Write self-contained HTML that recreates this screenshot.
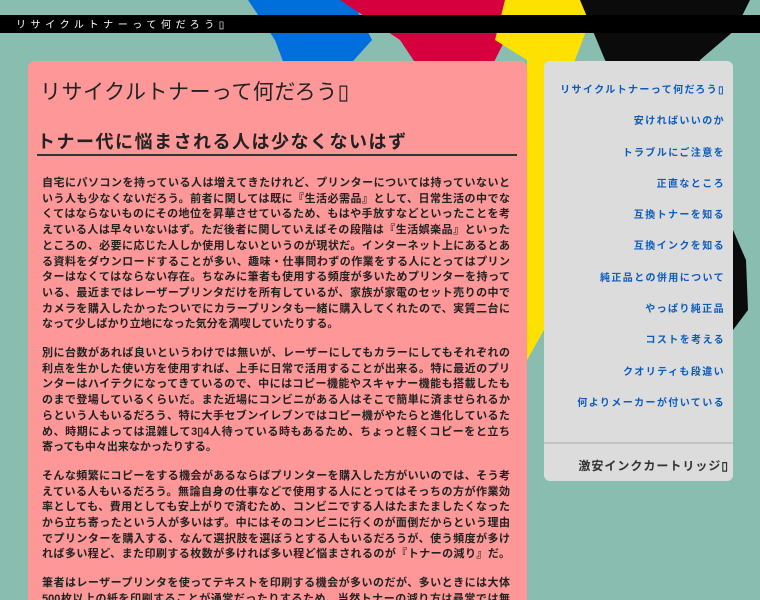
<!DOCTYPE html>
<html><head><meta charset="utf-8">
<style>
*{margin:0;padding:0;box-sizing:border-box}
html,body{width:760px;height:600px;overflow:hidden;background:#88bdb0;font-family:"Liberation Sans","Noto Sans CJK JP",sans-serif}
#bg{position:absolute;left:0;top:0}
#bar{position:absolute;left:0;top:15px;width:760px;height:18px;background:#000;color:#fff;font-size:10px;line-height:18px;padding-left:16px;letter-spacing:4.6px;padding-top:2px}
#main{position:absolute;left:28px;top:61px;width:499px;height:539px;overflow:hidden;background:#fe9898;border-radius:7px 7px 0 0;color:#222}
#main h1{position:absolute;left:12px;top:15px;font-size:21px;font-weight:normal;letter-spacing:0.5px;color:#222}
#main h2{position:absolute;left:9px;top:70px;width:480px;font-size:18px;font-weight:bold;border-bottom:2px solid #333;padding-bottom:1px;letter-spacing:1.5px;line-height:22px}
#txt{position:absolute;left:14px;top:115px;width:468px}
#txt p{font-size:11px;font-weight:bold;line-height:15.7px;margin-bottom:13px;color:#222}
#txt p span{display:block;white-space:nowrap;text-align:justify;text-align-last:justify}
#txt p span.l{text-align-last:left}
#side{position:absolute;left:544px;top:61px;width:189px;height:420px;background:#dcdcdc;border-radius:6px}
#side ul{list-style:none;padding-top:22px}
#side li{text-align:right;padding-right:8px;font-size:10px;font-weight:bold;color:#0c5cbc;letter-spacing:1.4px;height:31.3px;line-height:16px;white-space:nowrap}
#side .hr{position:absolute;left:0;top:381px;width:189px;height:2px;background:#c4c4c4}
#side .b{position:absolute;right:4px;top:396px;font-size:12px;font-weight:bold;color:#333;letter-spacing:1px}
</style></head><body>
<svg id="bg" width="760" height="600" viewBox="0 0 760 600">
<path d="M248 0 L352 0 L372 40 L345 70 L290 80 L275 40 Z" fill="#006fdc"/>
<path d="M340 0 L522 0 L505 40 L490 70 L420 70 L400 40 Z" fill="#d6003f"/>
<path d="M505 0 L598 0 L575 60 L560 120 L545 200 L544 330 L527 360 L527 60 L495 40 Z" fill="#ffe100"/>
<path d="M580 0 L750 0 L735 30 L700 60 L690 120 L720 200 L746 260 L748 310 L733 330 L733 200 L640 100 L605 60 Z" fill="#0b0b0b"/>
<path d="M395 40 Q405 55 412 75 L350 75 Z" fill="#88bdb0"/>
</svg>
<div id="bar">リサイクルトナーって何だろう&#x25AF;</div>
<div id="main">
<h1>リサイクルトナーって何だろう&#x25AF;</h1>
<h2>トナー代に悩まされる人は少なくないはず</h2>
<div id="txt">
<p><span>自宅にパソコンを持っている人は増えてきたけれど、プリンターについては持っていないと</span><span>いう人も少なくないだろう。前者に関しては既に『生活必需品』として、日常生活の中でな</span><span>くてはならないものにその地位を昇華させているため、もはや手放すなどといったことを考</span><span>えている人は早々いないはず。ただ後者に関していえばその段階は『生活娯楽品』といった</span><span>ところの、必要に応じた人しか使用しないというのが現状だ。インターネット上にあるとあ</span><span>る資料をダウンロードすることが多い、趣味・仕事問わずの作業をする人にとってはプリン</span><span>ターはなくてはならない存在。ちなみに筆者も使用する頻度が多いためプリンターを持って</span><span>いる、最近まではレーザープリンタだけを所有しているが、家族が家電のセット売りの中で</span><span>カメラを購入したかったついでにカラープリンタも一緒に購入してくれたので、実質二台に</span><span class="l">なって少しばかり立地になった気分を満喫していたりする。</span></p>
<p><span>別に台数があれば良いというわけでは無いが、レーザーにしてもカラーにしてもそれぞれの</span><span>利点を生かした使い方を使用すれば、上手に日常で活用することが出来る。特に最近のプリ</span><span>ンターはハイテクになってきているので、中にはコピー機能やスキャナー機能も搭載したも</span><span>のまで登場しているくらいだ。また近場にコンビニがある人はそこで簡単に済ませられるか</span><span>らという人もいるだろう、特に大手セブンイレブンではコピー機がやたらと進化しているた</span><span>め、時期によっては混雑して3&#x25AF;4人待っている時もあるため、ちょっと軽くコピーをと立ち</span><span class="l">寄っても中々出来なかったりする。</span></p>
<p><span>そんな頻繁にコピーをする機会があるならばプリンターを購入した方がいいのでは、そう考</span><span>えている人もいるだろう。無論自身の仕事などで使用する人にとってはそっちの方が作業効</span><span>率としても、費用としても安上がりで済むため、コンビニでする人はたまたましたくなった</span><span>から立ち寄ったという人が多いはず。中にはそのコンビニに行くのが面倒だからという理由</span><span>でプリンターを購入する、なんて選択肢を選ぼうとする人もいるだろうが、使う頻度が多け</span><span>れば多い程ど、また印刷する枚数が多ければ多い程ど悩まされるのが『トナーの減り』だ。</span></p>
<p><span>筆者はレーザープリンタを使ってテキストを印刷する機会が多いのだが、多いときには大体</span><span>500枚以上の紙を印刷することが通常だったりするため、当然トナーの減り方は尋常では無</span></p>
</div>
</div>
<div id="side">
<ul>
<li>リサイクルトナーって何だろう&#x25AF;</li>
<li>安ければいいのか</li>
<li>トラブルにご注意を</li>
<li>正直なところ</li>
<li>互換トナーを知る</li>
<li>互換インクを知る</li>
<li>純正品との併用について</li>
<li>やっぱり純正品</li>
<li>コストを考える</li>
<li>クオリティも段違い</li>
<li>何よりメーカーが付いている</li>
</ul>
<div class="hr"></div>
<div class="b">激安インクカートリッジ&#x25AF;</div>
</div>
</body></html>
